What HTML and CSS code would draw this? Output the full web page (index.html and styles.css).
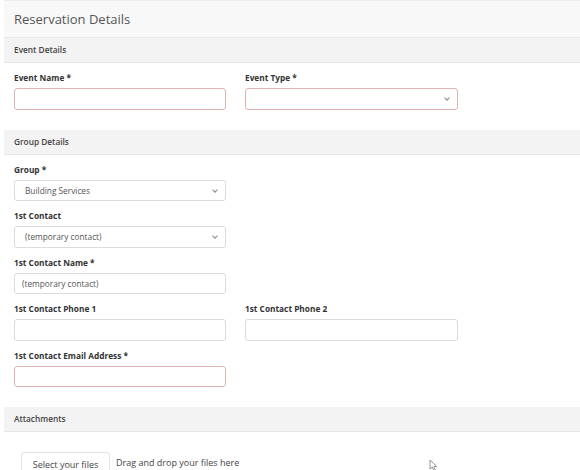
FILE: index.html
```html
<!DOCTYPE html>
<html lang="en">

<head>
    <meta charset="utf-8">
    <meta name="viewport" content="width=device-width, initial-scale=1.0">
    <title>Reservation Details</title>
    <link rel="stylesheet" href="styles.css">
</head>

<body>
    <div class="panel">
        <div class="panel-title">Reservation Details</div>

        <!-- Evento -->
        <div class="section-head">Event Details</div>
        <div class="section-body">
            <div class="row">
                <div class="field">
                    <label>Event Name *</label>
                    <div class="control required"></div>
                </div>
                <div class="field">
                    <label>Event Type *</label>
                    <div class="control required select"><span class="chevron"></span></div>
                </div>
            </div>
        </div>

        <!-- Grupo -->
        <div class="section-head">Group Details</div>
        <div class="section-body">
            <div class="field">
                <label>Group *</label>
                <div class="control select">Building Services<span class="chevron"></span></div>
            </div>
            <div class="field">
                <label>1st Contact</label>
                <div class="control select">(temporary contact)<span class="chevron"></span></div>
            </div>
            <div class="field">
                <label>1st Contact Name *</label>
                <div class="control plain">(temporary contact)</div>
            </div>
            <div class="row">
                <div class="field">
                    <label>1st Contact Phone 1</label>
                    <div class="control"></div>
                </div>
                <div class="field">
                    <label>1st Contact Phone 2</label>
                    <div class="control"></div>
                </div>
            </div>
            <div class="field">
                <label>1st Contact Email Address *</label>
                <div class="control required"></div>
            </div>
        </div>

        <!-- Anexos -->
        <div class="section-head">Attachments</div>
        <div class="upload">
            <button type="button" class="upload-btn">Select your files</button>
            <span class="upload-hint">Drag and drop your files here</span>
        </div>
    </div>

    <svg class="cursor" width="9" height="13" viewBox="0 0 9 13">
        <path d="M1 1 L1 10 L3.2 8 L5 12 L6.4 11.3 L4.7 7.5 L7.8 7.5 Z" fill="#fff" stroke="#888" stroke-width="0.9" />
    </svg>
</body>

</html>
```

FILE: styles.css
```css
/* Base da página */
body {
    margin: 0;
    background-color: #fff;
    font-family: "Open Sans", "Noto Sans", Arial, sans-serif;
    color: #333;
    position: relative;
    height: 470px;
    overflow: hidden;
}

.panel {
    margin-left: 4px;
}

/* Cabeçalho principal */
.panel-title {
    height: 36px;
    line-height: 36px;
    padding-left: 10px;
    font-size: 13px;
    color: #555;
    background-color: #f8f8f8;
    border-top: 1px solid #ececec;
    border-bottom: 1px solid #e9e9e9;
}

/* Faixas das seções */
.section-head {
    height: 24px;
    line-height: 24px;
    padding-left: 10px;
    font-size: 8.3px;
    font-weight: 600;
    color: #444;
    background-color: #f3f3f3;
    border-bottom: 1px solid #e6e6e6;
}

.section-body {
    padding: 9px 10px 11px;
}

.row {
    display: flex;
    gap: 19px;
}

.field {
    width: 212px;
    margin-bottom: 9px;
}

.row .field + .field {
    width: 213px;
}

label {
    display: block;
    font-size: 8.3px;
    font-weight: 700;
    line-height: 12px;
    margin-bottom: 4px;
    color: #333;
}

.control {
    position: relative;
    box-sizing: border-box;
    height: 21.5px;
    line-height: 19.5px;
    border: 1px solid #dcdcdc;
    border-radius: 3px;
    font-size: 8.3px;
    color: #555;
    padding-left: 10px;
}

.control.plain {
    padding-left: 7px;
}

.control.required {
    border-color: #e2b4b1;
}

.chevron {
    position: absolute;
    right: 8px;
    top: 7px;
    width: 3px;
    height: 3px;
    border-right: 1px solid #888;
    border-bottom: 1px solid #888;
    transform: rotate(45deg);
}

/* Área de upload */
.upload {
    padding: 20px 0 0 17px;
    display: flex;
    align-items: flex-start;
    gap: 6px;
}

.upload-btn {
    font-family: inherit;
    font-size: 9px;
    line-height: 22px;
    color: #444;
    background: #fff;
    border: 1px solid #e2e2e2;
    border-bottom: none;
    border-radius: 3px 3px 0 0;
    padding: 0;
    height: 24px;
    margin: 0;
    width: 89px;
}

.upload-hint {
    font-size: 9px;
    line-height: 22px;
    color: #444;
}

.cursor {
    position: absolute;
    left: 429px;
    top: 459px;
}
```
